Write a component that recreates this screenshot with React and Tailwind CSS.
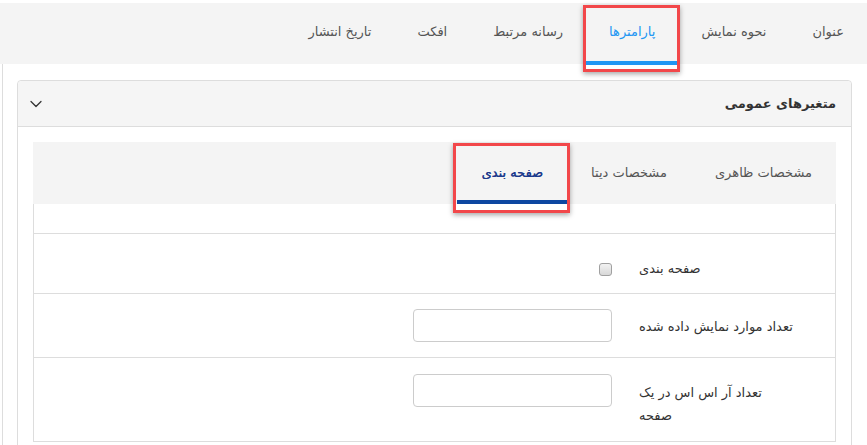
import { ChevronDown } from 'lucide-react';

const topTabs = ['عنوان', 'نحوه نمایش', 'پارامترها', 'رسانه مرتبط', 'افکت', 'تاریخ انتشار'];
const innerTabs = ['مشخصات ظاهری', 'مشخصات دیتا', 'صفحه بندی'];

function RedMark({ className }) {
    return (
        <div className={`absolute border-[3px] border-[#f2474a] shadow-[0_2px_5px_rgba(0,0,0,0.35)] pointer-events-none ${className}`}></div>
    );
}

export default function App() {
    return (
        <div dir="rtl" className="w-[867px] h-[445px] overflow-hidden bg-white pt-[3px] text-[13px] text-[#555]" style={{ fontFamily: '"DejaVu Sans", "Noto Sans", sans-serif' }}>
            {/* Top tabs */}
            <div className="h-[61px] bg-[#f4f4f4] flex">
                {topTabs.map((t, i) => (
                    <div key={t} className={`relative px-[23px] flex items-center ${i === 2 ? 'text-[#2196f3]' : 'text-[#555]'}`}>
                        <span className="-mt-[3px]">{t}</span>
                        {i === 2 && (
                            <>
                                <div className="absolute left-0 right-0 -bottom-[1px] h-[4px] bg-[#2196f3]"></div>
                                <RedMark className="-left-[3px] -right-[2px] top-[2px] -bottom-[8px]" />
                            </>
                        )}
                    </div>
                ))}
            </div>

            <div className="border-l border-[#ddd] ml-[2px] pt-[16px] h-[400px]">
                {/* Panel */}
                <div className="mr-[15px] ml-[14px] border border-[#ddd] rounded-[4px] h-[420px]">
                    <div className="h-[46px] bg-[#f5f5f5] border-b border-[#ddd] rounded-t-[4px] flex items-center justify-between pr-[15px] pl-[8px]">
                        <span className="font-bold text-[13px] text-[#333] tracking-[-0.4px]">متغیرهای عمومی</span>
                        <ChevronDown size={20} strokeWidth={1.5} className="text-[#333]" />
                    </div>

                    <div className="px-[15px] pt-[15px]">
                        {/* Inner tabs */}
                        <div className="h-[62px] bg-[#f4f4f4] flex">
                            {innerTabs.map((t, i) => (
                                <div key={t} className={`relative px-[24px] flex items-center ${i === 2 ? 'text-[#1c3a8c]' : 'text-[#555]'}`}>
                                    <span className={i === 2 ? '[text-shadow:0.3px_0_0_#1c3a8c]' : ''}>{t}</span>
                                    {i === 2 && (
                                        <>
                                            <div className="absolute left-0 right-0 bottom-0 h-[4px] bg-[#0d47a1]"></div>
                                            <RedMark className="-left-[4px] -right-[3px] top-[1px] -bottom-[9px]" />
                                        </>
                                    )}
                                </div>
                            ))}
                        </div>

                        {/* Form box */}
                        <div className="border-x border-b border-[#ddd]">
                            <div className="h-[29px]"></div>

                            <div className="h-[60px] border-t border-[#ddd] flex items-start pt-[29px] pr-[40px]">
                                <div className="w-[156px] text-left text-[#333] leading-[22px] -mt-[5px]">صفحه بندی</div>
                                <div className="mr-[27px] w-[199px] flex">
                                    <span className="w-[13px] h-[13px] rounded-[3px] border border-[#a0a0a0] bg-[linear-gradient(#f2f2f2,#d8d8d8)]"></span>
                                </div>
                            </div>

                            <div className="h-[64px] border-t border-[#ddd] flex items-start pt-[15px] pr-[40px]">
                                <div className="w-[156px] text-left text-[#333] leading-[22px] mt-[7px]">تعداد موارد نمایش داده شده</div>
                                <input className="mr-[27px] w-[199px] h-[33px] border border-[#ccc] rounded-[4px] bg-white" />
                            </div>

                            <div className="h-[84px] border-t border-[#ddd] flex items-start pt-[16px] pr-[40px]">
                                <div className="w-[156px] text-left text-[#333] leading-[23px] mt-[7px]">تعداد آر اس اس در یک صفحه</div>
                                <input className="mr-[27px] w-[199px] h-[33px] border border-[#ccc] rounded-[4px] bg-white" />
                            </div>
                        </div>
                    </div>
                </div>
            </div>
        </div>
    );
}
